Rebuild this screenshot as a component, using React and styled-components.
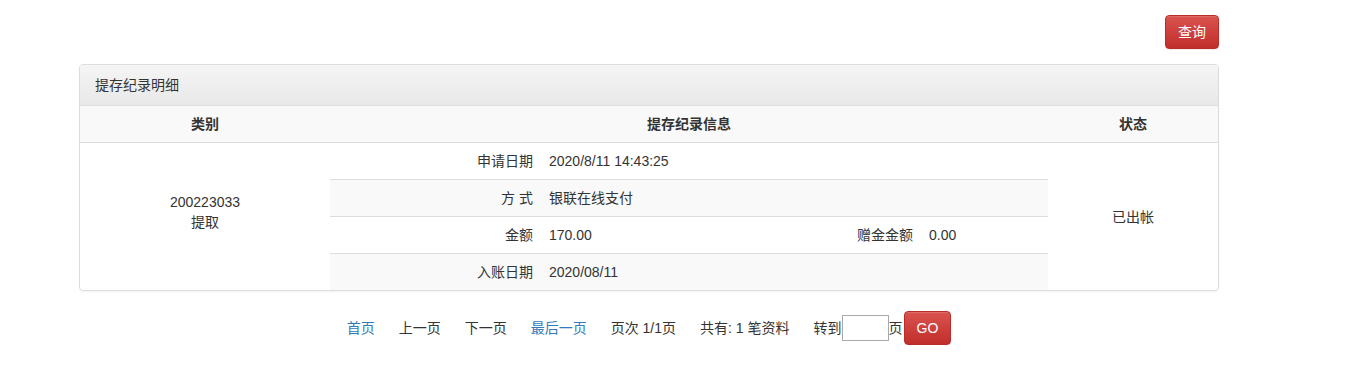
import React from "react";
import styled, { createGlobalStyle } from "styled-components";

const GlobalStyle = createGlobalStyle`
  body {
    margin: 0;
    background: #fff;
    color: #333;
    font-family: "Liberation Sans", "Noto Sans CJK SC", sans-serif;
    font-size: 14px;
    line-height: 20px;
  }
`;

const Page = styled.div`
  width: 1140px;
  padding: 15px 0 0 79px;
`;

const Toolbar = styled.div`
  display: flex;
  justify-content: flex-end;
`;

const DangerButton = styled.button`
  font-family: inherit;
  font-size: 14px;
  line-height: 20px;
  color: #fff;
  padding: 6px 12px;
  border: 1px solid #b92c28;
  border-radius: 4px;
  background: linear-gradient(to bottom, #d9534f 0%, #c12e2a 100%);
  box-shadow: inset 0 1px 0 rgba(255, 255, 255, 0.15), 0 1px 1px rgba(0, 0, 0, 0.075);
  cursor: pointer;
  margin-left: ${(p) => p.$gap || 0}px;
`;

const Panel = styled.div`
  margin-top: 15px;
  border: 1px solid #ddd;
  border-radius: 4px;
  box-shadow: 0 1px 2px rgba(0, 0, 0, 0.05);
  overflow: hidden;
`;

const PanelHeading = styled.div`
  padding: 10px 15px;
  background: linear-gradient(to bottom, #f5f5f5 0%, #e8e8e8 100%);
  border-bottom: 1px solid #ddd;
`;

const Table = styled.table`
  width: 100%;
  border-collapse: collapse;
  border-spacing: 0;
  table-layout: fixed;
`;

const HeadCell = styled.th`
  padding: 8px;
  text-align: center;
  font-weight: bold;
  background: #f9f9f9;
  border-bottom: 1px solid #ddd;
`;

const BodyCell = styled.td`
  padding: ${(p) => (p.$flush ? "0" : p.$raised ? "8px 8px 18px" : "8px")};
  text-align: center;
  vertical-align: middle;
`;

const InnerRow = styled.tr`
  background: ${(p) => (p.$striped ? "#f9f9f9" : "#fff")};
`;

const InnerCell = styled.td`
  padding: 8px;
  text-align: ${(p) => (p.$label ? "right" : "left")};
  border-top: ${(p) => (p.$first ? "none" : "1px solid #ddd")};
`;

const Pager = styled.div`
  display: flex;
  justify-content: center;
  align-items: center;
  margin-top: 20px;
`;

const PagerItem = styled.span`
  margin-right: 24px;
  color: ${(p) => (p.$link ? "#337ab7" : "#333")};
`;

const Jump = styled.span`
  display: flex;
  align-items: center;
`;

const PageInput = styled.input`
  width: 47px;
  height: 26px;
  box-sizing: border-box;
  border: 1px solid #a9a9a9;
  padding: 0 2px;
  margin: 0;
`;

const rows = [
  { label: "申请日期", value: "2020/8/11 14:43:25" },
  { label: "方 式", value: "银联在线支付" },
  { label: "金额", value: "170.00", label2: "赠金金额", value2: "0.00" },
  { label: "入账日期", value: "2020/08/11" },
];

export default function App() {
  return (
    <>
      <GlobalStyle />
      <Page>
        <Toolbar>
          <DangerButton>查询</DangerButton>
        </Toolbar>
        <Panel>
          <PanelHeading>提存纪录明细</PanelHeading>
          <Table>
            <colgroup>
              <col style={{ width: 250 }} />
              <col style={{ width: 718 }} />
              <col style={{ width: 170 }} />
            </colgroup>
            <thead>
              <tr>
                <HeadCell>类别</HeadCell>
                <HeadCell>提存纪录信息</HeadCell>
                <HeadCell>状态</HeadCell>
              </tr>
            </thead>
            <tbody>
              <tr>
                <BodyCell $raised>
                  200223033
                  <br />
                  提取
                </BodyCell>
                <BodyCell $flush>
                  <Table>
                    <colgroup>
                      <col style={{ width: 211 }} />
                      <col style={{ width: 280 }} />
                      <col style={{ width: 100 }} />
                      <col style={{ width: 127 }} />
                    </colgroup>
                    <tbody>
                      {rows.map((r, i) => (
                        <InnerRow key={r.label} $striped={i % 2 === 1}>
                          <InnerCell $label $first={i === 0}>
                            {r.label}
                          </InnerCell>
                          {r.label2 ? (
                            <>
                              <InnerCell $first={i === 0}>{r.value}</InnerCell>
                              <InnerCell $label $first={i === 0}>
                                {r.label2}
                              </InnerCell>
                              <InnerCell $first={i === 0}>{r.value2}</InnerCell>
                            </>
                          ) : (
                            <InnerCell colSpan={3} $first={i === 0}>
                              {r.value}
                            </InnerCell>
                          )}
                        </InnerRow>
                      ))}
                    </tbody>
                  </Table>
                </BodyCell>
                <BodyCell>已出帐</BodyCell>
              </tr>
            </tbody>
          </Table>
        </Panel>
        <Pager>
          <PagerItem $link>首页</PagerItem>
          <PagerItem>上一页</PagerItem>
          <PagerItem>下一页</PagerItem>
          <PagerItem $link>最后一页</PagerItem>
          <PagerItem>页次 1/1页</PagerItem>
          <PagerItem>共有: 1 笔资料</PagerItem>
          <Jump>
            转到
            <PageInput type="text" />
            页
            <DangerButton $gap={1}>GO</DangerButton>
          </Jump>
        </Pager>
      </Page>
    </>
  );
}
